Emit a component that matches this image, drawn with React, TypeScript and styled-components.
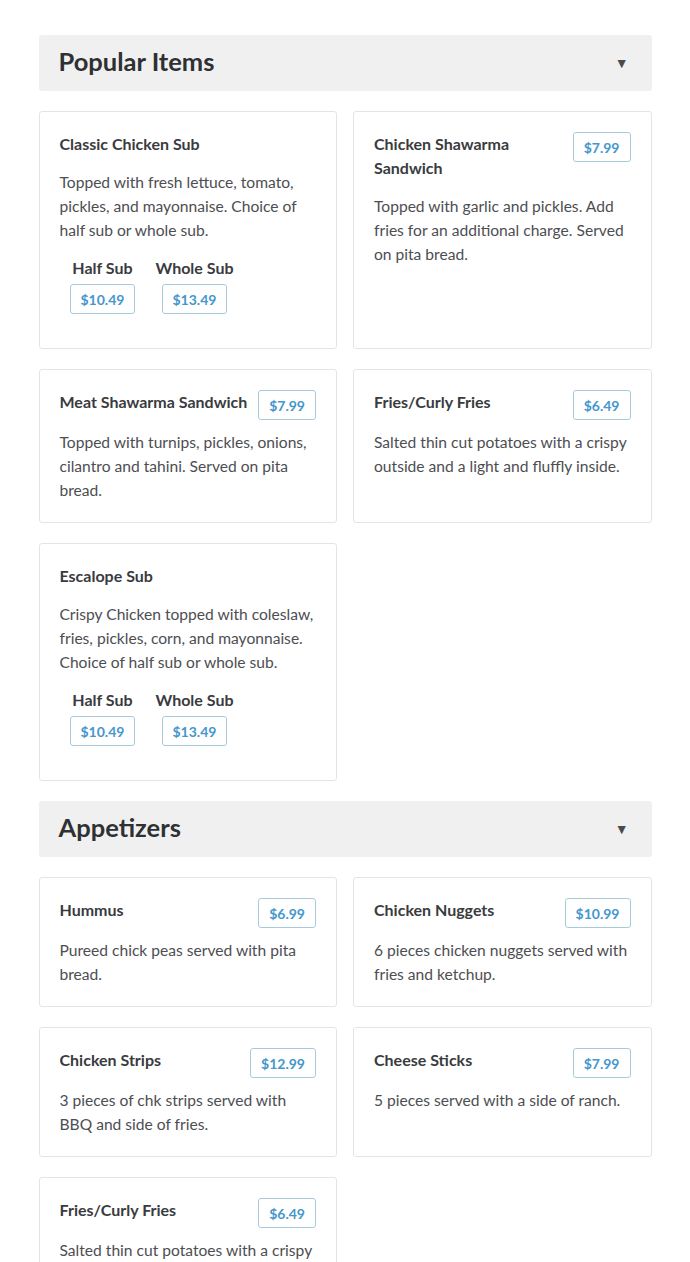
import React from "react";
import styled, { createGlobalStyle } from "styled-components";

const Global = createGlobalStyle`
  * { box-sizing: border-box; }
  body {
    margin: 0;
    background: #ffffff;
    font-family: Lato, "Open Sans", Arial, sans-serif;
    color: #333;
  }
`;

type Option = { label: string; price: string };
type Item = { name: string; desc: string; price?: string; options?: Option[] };
type Section = { title: string; items: Item[] };

const sections: Section[] = [
  {
    title: "Popular Items",
    items: [
      {
        name: "Classic Chicken Sub",
        desc: "Topped with fresh lettuce, tomato, pickles, and mayonnaise. Choice of half sub or whole sub.",
        options: [
          { label: "Half Sub", price: "$10.49" },
          { label: "Whole Sub", price: "$13.49" },
        ],
      },
      {
        name: "Chicken Shawarma Sandwich",
        desc: "Topped with garlic and pickles. Add fries for an additional charge. Served on pita bread.",
        price: "$7.99",
      },
      {
        name: "Meat Shawarma Sandwich",
        desc: "Topped with turnips, pickles, onions, cilantro and tahini. Served on pita bread.",
        price: "$7.99",
      },
      {
        name: "Fries/Curly Fries",
        desc: "Salted thin cut potatoes with a crispy outside and a light and fluffly inside.",
        price: "$6.49",
      },
      {
        name: "Escalope Sub",
        desc: "Crispy Chicken topped with coleslaw, fries, pickles, corn, and mayonnaise. Choice of half sub or whole sub.",
        options: [
          { label: "Half Sub", price: "$10.49" },
          { label: "Whole Sub", price: "$13.49" },
        ],
      },
    ],
  },
  {
    title: "Appetizers",
    items: [
      { name: "Hummus", desc: "Pureed chick peas served with pita bread.", price: "$6.99" },
      { name: "Chicken Nuggets", desc: "6 pieces chicken nuggets served with fries and ketchup.", price: "$10.99" },
      { name: "Chicken Strips", desc: "3 pieces of chk strips served with BBQ and side of fries.", price: "$12.99" },
      { name: "Cheese Sticks", desc: "5 pieces served with a side of ranch.", price: "$7.99" },
      {
        name: "Fries/Curly Fries",
        desc: "Salted thin cut potatoes with a crispy outside and a light and fluffly inside.",
        price: "$6.49",
      },
    ],
  },
];

const Page = styled.div`
  width: 613px;
  margin: 0 auto;
  padding-top: 35px;
  display: flex;
  flex-direction: column;
  gap: 20px;
`;

const SectionHeader = styled.div`
  height: 56px;
  background: #f0f0f1;
  border-radius: 3px;
  display: flex;
  align-items: center;
  justify-content: space-between;
  padding: 0 23px 0 20px;
`;

const SectionTitle = styled.h2`
  margin: -2px 0 0;
  font-size: 25.5px;
  line-height: 1;
  font-weight: 700;
  color: #2f3033;
`;

const Caret = styled.span`
  font-size: 14px;
  color: #4a4a4a;
  line-height: 1;
`;

const Grid = styled.div`
  display: grid;
  grid-template-columns: 1fr 1fr;
  gap: 20px 16px;
`;

const Card = styled.div`
  border: 1px solid #e4e4e4;
  border-radius: 3px;
  padding: 20px;
  background: #fff;
`;

const CardHead = styled.div`
  display: flex;
  align-items: flex-start;
  justify-content: space-between;
  gap: 8px;
  margin-bottom: 14px;
`;

const ItemName = styled.div`
  font-size: 16px;
  line-height: 24px;
  font-weight: 700;
  color: #3a3b3e;
`;

const Price = styled.span<{ $flush?: boolean }>`
  flex-shrink: 0;
  display: inline-flex;
  align-items: center;
  justify-content: center;
  height: 30px;
  padding: 0 10px;
  margin-bottom: ${(p) => (p.$flush ? "0" : "-4px")};
  border: 1px solid #a8cbdc;
  border-radius: 3px;
  font-size: 14px;
  font-weight: 700;
  color: #4597cc;
  background: #fff;
`;

const Desc = styled.p`
  margin: 0;
  font-size: 15.6px;
  line-height: 24px;
  color: #4d4e52;
`;

const Options = styled.div`
  display: flex;
  margin-top: 14px;
  margin-bottom: 14px;
`;

const OptionCol = styled.div`
  display: flex;
  flex-direction: column;
  align-items: center;
  gap: 4px;
  padding: 0 10px;
`;

const OptionLabel = styled.div`
  font-size: 16px;
  line-height: 24px;
  font-weight: 700;
  color: #3a3b3e;
`;

function ItemCard({ item }: { item: Item }) {
  return (
    <Card>
      <CardHead>
        <ItemName>{item.name}</ItemName>
        {item.price && <Price>{item.price}</Price>}
      </CardHead>
      <Desc>{item.desc}</Desc>
      {item.options && (
        <Options>
          {item.options.map((o) => (
            <OptionCol key={o.label}>
              <OptionLabel>{o.label}</OptionLabel>
              <Price $flush>{o.price}</Price>
            </OptionCol>
          ))}
        </Options>
      )}
    </Card>
  );
}

export default function App() {
  return (
    <>
      <Global />
      <Page>
        {sections.map((s) => (
          <React.Fragment key={s.title}>
            <SectionHeader>
              <SectionTitle>{s.title}</SectionTitle>
              <Caret>▼</Caret>
            </SectionHeader>
            <Grid>
              {s.items.map((it, i) => (
                <ItemCard key={i} item={it} />
              ))}
            </Grid>
          </React.Fragment>
        ))}
      </Page>
    </>
  );
}
